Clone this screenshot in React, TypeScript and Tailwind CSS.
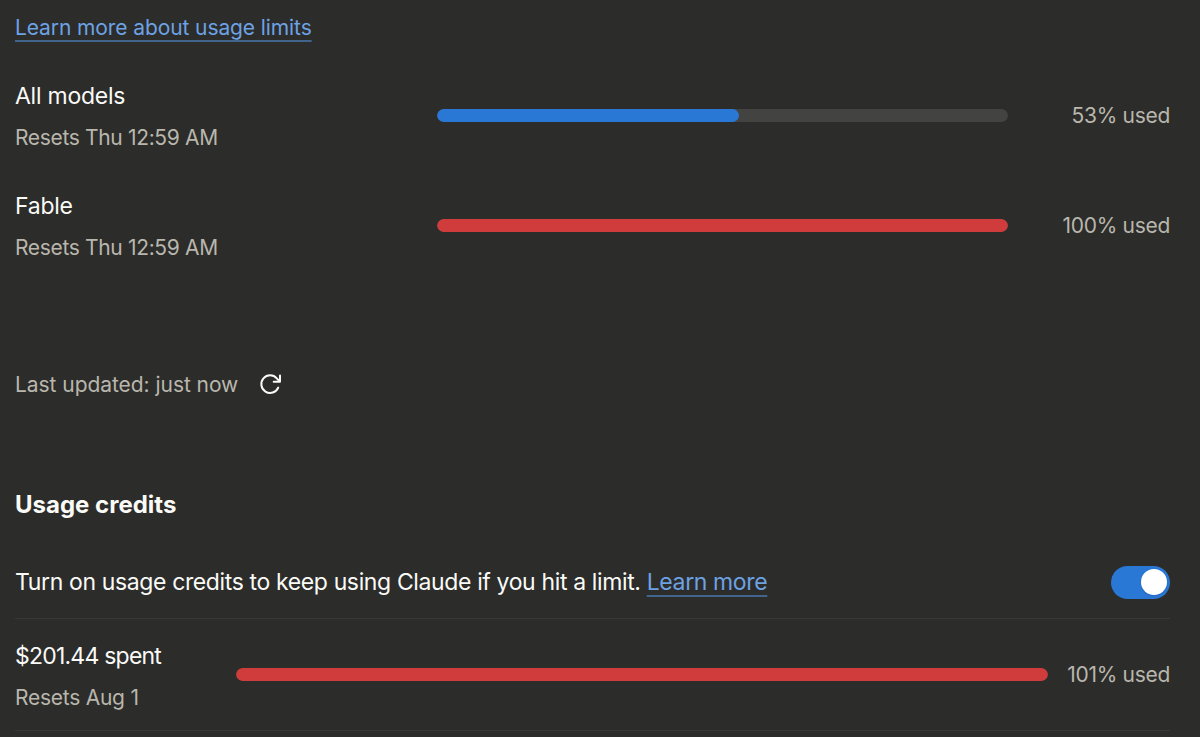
import { useState } from 'react';

type UsageLimit = {
  id: string;
  label: string;
  resets: string;
  percent: number;
  color: string;
};

const LIMITS: UsageLimit[] = [
  {
    id: 'all',
    label: 'All models',
    resets: 'Resets Thu 12:59 AM',
    percent: 53,
    color: 'bg-[#2a78d6]',
  },
  {
    id: 'fable',
    label: 'Fable',
    resets: 'Resets Thu 12:59 AM',
    percent: 100,
    color: 'bg-[#d03b3b]',
  },
];

function UsageBar({ percent, color }: { percent: number; color: string }) {
  return (
    <div className="h-[13px] w-full overflow-hidden rounded-full bg-[#434341]">
      <div
        className={`h-full rounded-full ${color}`}
        style={{ width: `${Math.min(percent, 100)}%` }}
      />
    </div>
  );
}

function UsedLabel({ percent }: { percent: number }) {
  return (
    <div className="flex-1 pt-px text-right text-[21px] leading-8 tracking-[-0.3px] whitespace-nowrap text-[#b9b7ad]">
      {percent}% used
    </div>
  );
}

function LimitRow({ limit }: { limit: UsageLimit }) {
  return (
    <div className="flex h-[110px] items-center">
      <div className="w-[421.5px] shrink-0 pt-[4px] whitespace-nowrap">
        <div className="text-[23px] leading-8 tracking-[-0.25px] text-[#fafaf7]">{limit.label}</div>
        <div className="mt-2.5 text-[21px] leading-8 tracking-[-0.34px] text-[#b9b7ad]">
          {limit.resets}
        </div>
      </div>
      <div className="w-[571.5px] shrink-0">
        <UsageBar percent={limit.percent} color={limit.color} />
      </div>
      <UsedLabel percent={limit.percent} />
    </div>
  );
}

function RefreshIcon() {
  return (
    <svg className="h-6 w-6" viewBox="0 0 24 24" fill="none" stroke="currentColor" strokeWidth={2}>
      <path
        strokeLinecap="round"
        strokeLinejoin="round"
        d="M19.2 14.6A8.8 8.8 0 1 1 17.8 5.4L21 8.7M21 2.4V8.7H14.7"
      />
    </svg>
  );
}

export default function App() {
  const [enabled, setEnabled] = useState(true);

  return (
    <div className="h-[737px] overflow-hidden bg-[#2c2c2a] pr-[30px] pl-[15px] font-['Inter','Liberation_Sans',sans-serif] text-[#fafaf7]">
      <div className="flex h-[60px] items-start pt-3">
        <a
          href="#limits"
          className="text-[21px] leading-8 tracking-[-0.1px] text-[#6da2e4] underline decoration-[#41648d] decoration-2 underline-offset-[5px]">
          Learn more about usage limits
        </a>
      </div>

      {LIMITS.map(limit => (
        <LimitRow key={limit.id} limit={limit} />
      ))}

      <div className="mt-[89px] flex h-8 items-center gap-[21px]">
        <span className="text-[21px] leading-8 tracking-[-0.05px] text-[#b9b7ad]">
          Last updated: just now
        </span>
        <button type="button" aria-label="Refresh">
          <RefreshIcon />
        </button>
      </div>

      <h2 className="mt-[86px] text-[24px] leading-9 font-bold">Usage credits</h2>

      <div className="mt-[23px] flex h-[73px] items-center justify-between border-b border-[#383836]">
        <p className="text-[23px] leading-8 tracking-[-0.37px] whitespace-nowrap">
          Turn on usage credits to keep using Claude if you hit a limit.{' '}
          <a
            href="#credits"
            className="text-[#6da2e4] underline decoration-[#41648d] decoration-2 underline-offset-[5px]">
            Learn more
          </a>
        </p>
        <button
          type="button"
          role="switch"
          aria-checked={enabled}
          aria-label="Usage credits"
          onClick={() => setEnabled(!enabled)}
          className={`flex h-[33px] w-[59px] items-center rounded-full px-[3px] ${
            enabled ? 'justify-end bg-[#2a78d6]' : 'justify-start bg-[#434341]'
          }`}>
          <span className="h-[26px] w-[26px] rounded-full bg-white shadow-sm" />
        </button>
      </div>

      <div className="flex h-[112px] items-center border-b border-[#383836]">
        <div className="w-[221px] shrink-0 pt-[4px] whitespace-nowrap">
          <div className="text-[23px] leading-8 tracking-[-0.78px]">$201.44 spent</div>
          <div className="mt-2.5 text-[21px] leading-8 tracking-[-0.25px] text-[#b9b7ad]">
            Resets Aug 1
          </div>
        </div>
        <div className="w-[812px] shrink-0">
          <UsageBar percent={101} color="bg-[#d03b3b]" />
        </div>
        <UsedLabel percent={101} />
      </div>
    </div>
  );
}
